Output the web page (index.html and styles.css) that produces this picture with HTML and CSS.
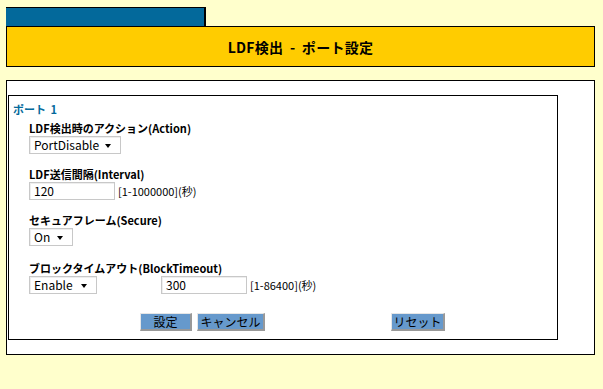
FILE: index.html
```html
<!DOCTYPE html>
<html lang="ja">
<head>
<meta charset="utf-8">
<title>LDF検出 - ポート設定</title>
<link rel="stylesheet" href="styles.css">
</head>
<body>
<div class="page">
  <div class="tab"></div>
  <div class="header"><h1 class="title">LDF検出 - ポート設定</h1></div>
  <div class="outer">
    <div class="inner">
      <div class="port">ポート 1</div>
      <div class="fields">
        <div class="field">
          <div class="label">LDF検出時のアクション(Action)</div>
          <div class="row">
            <span class="select w-action">PortDisable<span class="arrow"></span></span>
          </div>
        </div>
        <div class="field">
          <div class="label">LDF送信間隔(Interval)</div>
          <div class="row">
            <span class="input w-num">120</span>
            <span class="hint">[1-1000000](秒)</span>
          </div>
        </div>
        <div class="field">
          <div class="label">セキュアフレーム(Secure)</div>
          <div class="row">
            <span class="select w-on">On<span class="arrow"></span></span>
          </div>
        </div>
        <div class="field field-last">
          <div class="label">ブロックタイムアウト(BlockTimeout)</div>
          <div class="row">
            <span class="select w-enable">Enable<span class="arrow"></span></span>
            <span class="input w-num gap-timeout">300</span>
            <span class="hint">[1-86400](秒)</span>
          </div>
        </div>
      </div>
      <div class="buttons">
        <button class="btn w-set">設定</button>
        <button class="btn w-cancel">キャンセル</button>
        <button class="btn w-reset">リセット</button>
      </div>
    </div>
  </div>
</div>
</body>
</html>
```

FILE: styles.css
```css
html, body {
  margin: 0;
  padding: 0;
  background: #ffffcc;
  font-family: "Noto Sans CJK JP", "Noto Sans", sans-serif;
  color: #000;
}

.page {
  padding: 7px 8px 0 6px;
  width: 589px;
}

.tab {
  width: 198px;
  height: 18px;
  background: #03699b;
  border-top: 1px solid #000;
  border-right: 2px solid #000;
}

.header {
  height: 39px;
  background: #ffcc00;
  border: 1px solid #000;
  display: flex;
  align-items: center;
  justify-content: center;
}

.title {
  margin: 0;
  font-size: 14px;
  font-weight: bold;
  line-height: 16px;
  padding-top: 1px;
  letter-spacing: 0.3px;
  word-spacing: 3px;
}

.outer {
  margin-top: 13px;
  background: #fff;
  border: 1px solid #000;
  padding: 14px 36px 14px 1px;
}

.inner {
  border: 1px solid #000;
  padding: 6px 0 8px 4px;
}

.port {
  color: #03699b;
  font-size: 11px;
  font-weight: bold;
  line-height: 14px;
  word-spacing: 2px;
}

.fields {
  margin-top: 5px;
  padding-left: 16px;
  display: flex;
  flex-direction: column;
  gap: 13px;
}

.field {
  display: flex;
  flex-direction: column;
  gap: 1px;
}

.field-last {
  margin-top: 2px;
}

.label {
  font-size: 11px;
  font-weight: bold;
  line-height: 14px;
}

.row {
  display: flex;
  align-items: center;
  height: 18px;
}

.select, .input {
  box-sizing: border-box;
  height: 18px;
  background: #fff;
  border: 1px solid #c8c8c8;
  box-shadow: inset 1px 1px 0 #eee;
  font-size: 12px;
  line-height: 16px;
  padding-left: 4px;
  position: relative;
  display: inline-block;
}

.arrow {
  position: absolute;
  right: 9px;
  top: 7px;
  width: 0;
  height: 0;
  border-left: 3.5px solid transparent;
  border-right: 3.5px solid transparent;
  border-top: 4px solid #000;
}

.w-action { width: 92px; }
.w-on { width: 44px; }
.w-enable { width: 68px; }
.w-num { width: 86px; }
.gap-timeout { margin-left: 64px; }

.hint {
  font-size: 11px;
  margin-left: 3px;
  line-height: 14px;
}

.buttons {
  display: flex;
  margin-top: 19px;
  padding-left: 127px;
  gap: 5px;
}

.btn {
  box-sizing: border-box;
  height: 18px;
  background: #6699cc;
  border-style: solid;
  border-width: 1px 2px 2px 1px;
  border-color: #e6e6e6 #999 #999 #e6e6e6;
  font-family: "Noto Sans CJK JP", sans-serif;
  font-size: 12px;
  line-height: 14px;
  padding: 0;
  color: #000;
}

.w-set { width: 52px; }
.w-cancel { width: 68px; }
.w-reset { width: 54px; margin-left: 121px; }
```
